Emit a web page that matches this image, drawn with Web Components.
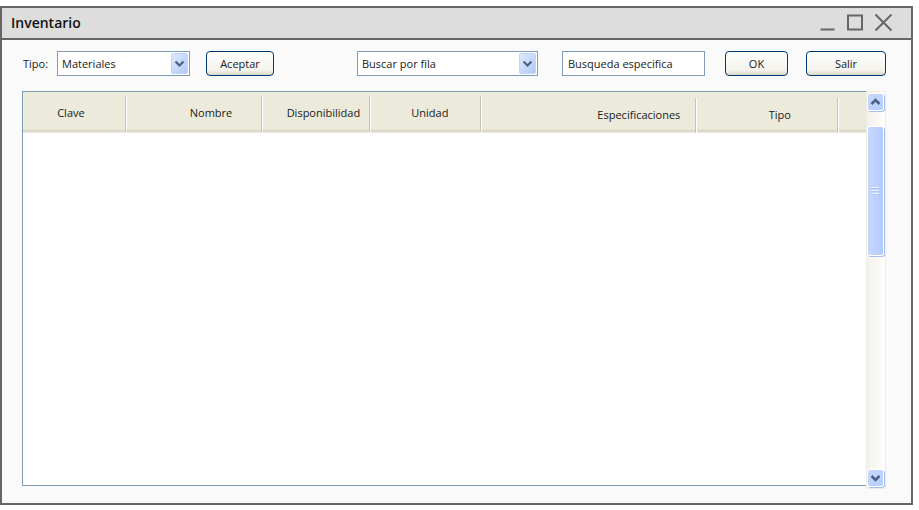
<!DOCTYPE html>
<html lang="es">
<head>
<meta charset="utf-8">
<title>Inventario</title>
<style>
  html { height: 100%; background: #fff; }
  body {
    box-sizing: border-box; margin: 0; padding: 6px 6px 5px 0; min-height: 100%;
    display: flex; font-family: "Open Sans", "Noto Sans", sans-serif; font-size: 11px; line-height: 16px; color: #1a1a1a;
  }
  app-window { flex: 1; }
</style>
</head>
<body>
<app-window heading="Inventario">
  <inventory-toolbar></inventory-toolbar>
  <inventory-grid></inventory-grid>
</app-window>

<script>
const define = (name, html, setup) => {
  const template = document.createElement('template');
  template.innerHTML = '<style>*{box-sizing:border-box}</style>' + html;
  customElements.define(name, class extends HTMLElement {
    constructor() {
      super();
      this.attachShadow({ mode: 'open' }).append(template.content.cloneNode(true));
    }
    connectedCallback() { if (setup) setup(this, this.shadowRoot); }
  });
};

define('app-window', `
  <style>
    :host { display: flex; flex-direction: column; box-sizing: border-box; min-width: 0; border: 2px solid #666; background: #fafafa; }
    header { display: flex; align-items: center; height: 32px; padding: 0 18px 0 9px; background: #ddd; border-bottom: 2px solid #666; }
    h1 { flex: 1; margin: 0; font-size: 14px; line-height: 20px; font-weight: 600; color: #111; }
    .controls { display: flex; gap: 10px; }
    button { width: 18px; height: 18px; padding: 0; border: 0; background: none; display: block; }
    svg { display: block; width: 18px; height: 18px; fill: none; stroke: #666; stroke-width: 2; }
    main { flex: 1; display: flex; flex-direction: column; padding: 11px 25px 14px 20px; }
  </style>
  <header>
    <h1></h1>
    <div class="controls">
      <button aria-label="Minimizar"><svg viewBox="0 0 18 18"><path d="M1.5 15.5h14"/></svg></button>
      <button aria-label="Maximizar"><svg viewBox="0 0 18 18"><path d="M1 1.5h14v14H1z"/></svg></button>
      <button aria-label="Cerrar"><svg viewBox="0 0 18 18"><path d="M.5 .5l16 16M16.500 .5L.5 16.500"/></svg></button>
    </div>
  </header>
  <main><slot></slot></main>
`, (el, root) => { root.querySelector('h1').textContent = el.getAttribute('heading'); });

define('xp-select', `
  <style>
    :host { display: grid; height: 25px; }
    select, svg { grid-area: 1 / 1; }
    select { appearance: none; width: 100%; height: 25px; margin: 0; padding: 0 22px 0 4px; border: 1px solid #7f9db9; border-radius: 0; background: #fff; font: inherit; color: inherit; }
    svg { justify-self: end; align-self: center; width: 17px; height: 21px; margin-right: 2px; pointer-events: none; }
  </style>
  <select><option></option></select>
  <svg viewBox="0 0 17 21" aria-hidden="true">
    <defs><linearGradient id="g" x2="1" y2="1"><stop offset="0" stop-color="#e1eafe"/><stop offset="1" stop-color="#aec8f7"/></linearGradient></defs>
    <rect x=".5" y=".5" width="16" height="20" rx="1.5" fill="url(#g)" stroke="#c3d3fb"/>
    <path d="M4.500 8.500l4 4 4-4" fill="none" stroke="#4d6185" stroke-width="2.2"/>
  </svg>
`, (el, root) => {
  root.querySelector('option').textContent = el.getAttribute('value');
  root.querySelector('select').setAttribute('aria-label', el.getAttribute('label'));
});

define('xp-button', `
  <style>
    :host { display: block; height: 25px; }
    button { width: 100%; height: 25px; padding: 0; border: 1px solid #003c74; border-radius: 4px; background: linear-gradient(#fff, #f3f2ec 80%, #d9d5c9); font: inherit; color: inherit; }
  </style>
  <button type="button"><slot></slot></button>
`);

define('inventory-toolbar', `
  <style>
    :host { display: flex; align-items: center; padding-bottom: 15px; }
    .label { width: 35px; padding-left: 1px; }
    .type { width: 133px; margin-right: 16px; }
    .accept { width: 68px; }
    .row { width: 181px; margin-left: auto; margin-right: 24px; }
    input { width: 143px; height: 25px; margin: 0 20px 0 0; padding: 0 5px; border: 1px solid #7f9db9; background: #fff; font: inherit; color: inherit; }
    .ok { width: 63px; margin-right: 18px; }
    .exit { width: 80px; }
  </style>
  <span class="label">Tipo:</span>
  <xp-select class="type" label="Tipo" value="Materiales"></xp-select>
  <xp-button class="accept">Aceptar</xp-button>
  <xp-select class="row" label="Buscar por fila" value="Buscar por fila"></xp-select>
  <input type="text" aria-label="Busqueda especifica" value="Busqueda especifica">
  <xp-button class="ok">OK</xp-button>
  <xp-button class="exit">Salir</xp-button>
`);

define('xp-scrollbar', `
  <style>
    :host { display: flex; flex-direction: column; width: 20px; padding: 1px 0; border: 1px solid #eeede5; background: linear-gradient(90deg, #f3f1ec, #fefefb); }
    button { flex: none; display: block; width: 17px; height: 18px; padding: 0; border: 1px solid #fff; border-radius: 3px; background: linear-gradient(135deg, #c8d6fb, #b6cffd); box-shadow: 1px 1px 0 #a5bfee; }
    svg { display: block; width: 15px; height: 16px; fill: none; stroke: #4d6185; stroke-width: 2.5; }
    .track { flex: 1; padding-top: 15px; }
    .thumb { display: flex; align-items: center; justify-content: center; width: 17px; height: 38%; border: 1px solid #fff; border-radius: 3px; background: linear-gradient(90deg, #c8d6fb, #bdd0fb 60%, #aecbff); box-shadow: 1px 1px 0 #a5bfee; }
    .grip { width: 8px; height: 9px; margin-right: 1px; background: repeating-linear-gradient(#eef4fe 0 1px, #a9c3f5 1px 2px, #c0d3fb 2px 3px); }
  </style>
  <button type="button" aria-label="Subir"><svg viewBox="0 0 15 16"><path d="M3.500 10l4-4 4 4"/></svg></button>
  <div class="track"><div class="thumb"><div class="grip"></div></div></div>
  <button type="button" aria-label="Bajar"><svg viewBox="0 0 15 16"><path d="M3.500 6l4 4 4-4"/></svg></button>
`);

define('inventory-grid', `
  <style>
    :host { flex: 1; display: flex; }
    .sheet { flex: 1; min-width: 0; margin-bottom: 3px; border: 1px solid #7f9db9; border-right: 0; background: #fff; }
    table { width: 100%; table-layout: fixed; border-collapse: collapse; }
    tr { height: 41px; background: linear-gradient(#ebeadb 37px, #d6d2c2 39px, #f4f2e9 41px); }
    th { position: relative; padding: 0; vertical-align: middle; text-align: right; font-weight: 400; white-space: nowrap; }
    th.low { padding-top: 5px; }
    th:not(:last-child)::after { content: ""; position: absolute; top: 4px; right: 0; bottom: 2px; width: 2px; background: linear-gradient(90deg, #c7c5b2 50%, #fff 50%); }
    th.low:not(:last-child)::after { top: 6px; bottom: 0; }
  </style>
  <div class="sheet">
    <table>
      <colgroup><col style="width:12.3%"><col style="width:16.2%"><col style="width:12.8%"><col style="width:13.2%"><col style="width:25.5%"><col style="width:16.8%"><col></colgroup>
      <thead><tr>
        <th scope="col" style="padding-right:42px">Clave</th>
        <th scope="col" style="padding-right:31px">Nombre</th>
        <th scope="col" style="padding-right:11px">Disponibilidad</th>
        <th scope="col" style="padding-right:34px">Unidad</th>
        <th scope="col" class="low" style="padding-right:17px">Especificaciones</th>
        <th scope="col" class="low" style="padding-right:48px">Tipo</th>
        <td class="low"></td>
      </tr></thead>
    </table>
  </div>
  <xp-scrollbar></xp-scrollbar>
`);
</script>
</body>
</html>
